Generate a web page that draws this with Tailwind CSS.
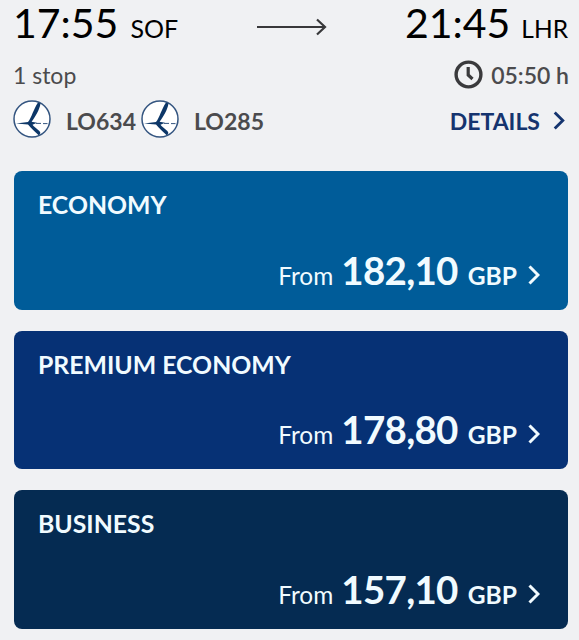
<!DOCTYPE html>
<html lang="en">
<head>
  <meta charset="UTF-8">
  <meta name="viewport" content="width=device-width, initial-scale=1.0">
  <title>Flight SOF - LHR</title>
  <script src="https://cdn.jsdelivr.net/npm/@tailwindcss/browser@4"></script>
</head>
<body class="h-screen bg-[#f0f1f3] font-['Lato',sans-serif] text-[#4b4b4d]">
  <svg class="hidden">
    <symbol id="carrier" viewBox="0 0 38 38">
      <circle cx="19" cy="19" r="18" fill="#fff" stroke="#345580" stroke-width="1.5"/>
      <path d="M3 23.4 L15 22 C18.5 18 20.5 9 25 2.6 L27.5 3.6 C26.5 10 22.5 16.5 18.6 21.8 L24 22.8 L19.5 24.8 C22 28 26.5 30 27.4 33 L26 35.6 C22 31.5 18 28 15 24.4 Z" fill="#0d3768"/>
      <path d="M23 23.4 H28 M30 23.6 H34.5" stroke="#345580" stroke-width="1"/>
    </symbol>
    <symbol id="chevron" viewBox="0 0 12 20">
      <path d="M1.5 1.5 L10 10 L1.5 18.5" fill="none" stroke="currentColor" stroke-width="3"/>
    </symbol>
  </svg>

  <main class="pl-[14px] pr-[11px]">
    <!-- times -->
    <div class="flex h-[46px] justify-between text-black">
      <div class="-ml-px flex items-baseline text-[41px] leading-[50px] -mt-[2px]">17:55<span class="ml-[12px] text-[25px] leading-[30px]">SOF</span></div>
      <svg class="mt-[18px] h-[18px] w-[70px]" viewBox="0 0 70 18" fill="none" stroke="#38383a" stroke-width="2.2">
        <path d="M0 9 H68 M60 1.5 L68 9 L60 16.5"/>
      </svg>
      <div class="flex items-baseline text-[41px] leading-[50px] -mt-[2px]">21:45<span class="ml-[11px] text-[24.5px] leading-[30px]">LHR</span></div>
    </div>

    <!-- stops and duration -->
    <div class="mt-[14px] flex h-[30px] items-center justify-between text-[23px] leading-[30px]">
      <span class="-ml-px">1 stop</span>
      <span class="-mr-px flex items-center gap-[8px] font-semibold">
        <svg class="-mt-[2px] h-[29px] w-[29px]" viewBox="0 0 29 29" fill="none" stroke="#3a3a3c">
          <circle cx="14.5" cy="14.5" r="12.4" stroke-width="3.4"/>
          <path d="M14.2 7 V15 L18.5 19" stroke-width="3.2"/>
        </svg>
        05:50 h
      </span>
    </div>

    <!-- flight numbers -->
    <div class="mt-[10px] flex h-[38px] items-center justify-between text-[23px] font-bold">
      <div class="flex items-center">
        <svg class="-ml-px h-[38px] w-[38px]"><use href="#carrier"/></svg>
        <span class="ml-[15px] w-[75px] pt-[4px]">LO634</span>
        <svg class="h-[38px] w-[38px]"><use href="#carrier"/></svg>
        <span class="ml-[15px] pt-[4px]">LO285</span>
      </div>
      <a class="flex items-center gap-[13px] pt-[4px] text-[#15346f]">DETAILS
        <svg class="mr-[3px] -mt-[2px] h-[19px] w-[12px]"><use href="#chevron"/></svg>
      </a>
    </div>

    <!-- fares -->
    <div class="mt-[33px] flex flex-col gap-[21px] text-[#f1fbff]">
      <div class="flex h-[138.5px] flex-col justify-between rounded-[8px] bg-[#005c99] pt-[19px] pr-[28px] pb-[11px] pl-[24px]">
        <h2 class="text-[24.8px] leading-[30px] font-bold">ECONOMY</h2>
        <p class="flex items-baseline justify-end text-[24.4px] leading-[46px]">From
          <b class="mr-[10px] ml-[8px] text-[38.5px] font-bold tracking-[-0.7px]">182,10</b>
          <span class="font-bold text-[24.6px]">GBP</span>
          <svg class="ml-[11px] h-[20px] w-[12px]"><use href="#chevron"/></svg>
        </p>
      </div>
      <div class="flex h-[138.5px] flex-col justify-between rounded-[8px] bg-[#063175] pt-[19px] pr-[28px] pb-[11px] pl-[24px]">
        <h2 class="text-[24.8px] leading-[30px] font-bold">PREMIUM ECONOMY</h2>
        <p class="flex items-baseline justify-end text-[24.4px] leading-[46px]">From
          <b class="mr-[10px] ml-[8px] text-[38.5px] font-bold tracking-[-0.7px]">178,80</b>
          <span class="font-bold text-[24.6px]">GBP</span>
          <svg class="ml-[11px] h-[20px] w-[12px]"><use href="#chevron"/></svg>
        </p>
      </div>
      <div class="flex h-[138.5px] flex-col justify-between rounded-[8px] bg-[#052b52] pt-[19px] pr-[28px] pb-[11px] pl-[24px]">
        <h2 class="text-[24.8px] leading-[30px] font-bold">BUSINESS</h2>
        <p class="flex items-baseline justify-end text-[24.4px] leading-[46px]">From
          <b class="mr-[10px] ml-[8px] text-[38.5px] font-bold tracking-[-0.7px]">157,10</b>
          <span class="font-bold text-[24.6px]">GBP</span>
          <svg class="ml-[11px] h-[20px] w-[12px]"><use href="#chevron"/></svg>
        </p>
      </div>
    </div>
  </main>
</body>
</html>
